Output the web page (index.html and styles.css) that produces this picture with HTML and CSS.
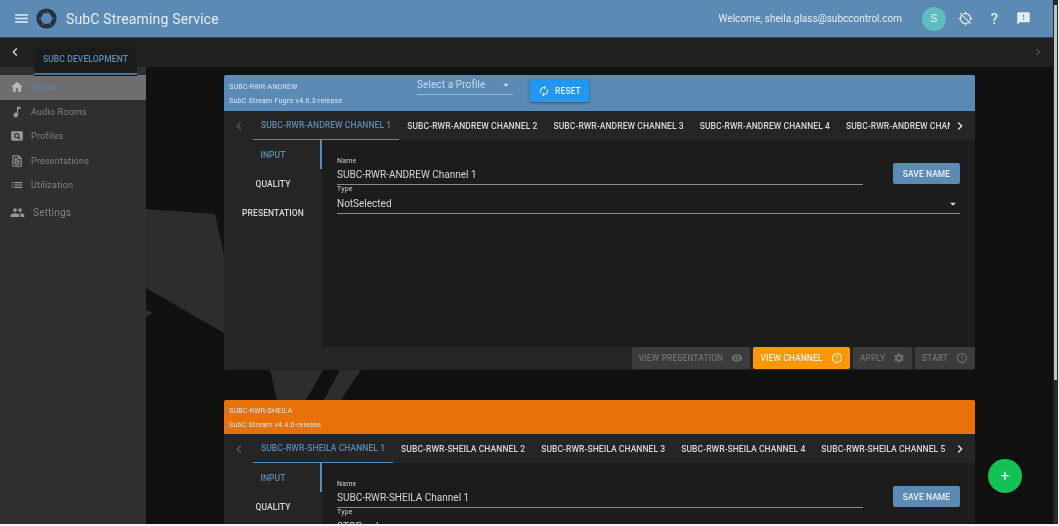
FILE: index.html
```html
<!DOCTYPE html>
<html lang="en">
<head>
    <meta charset="UTF-8">
    <meta name="viewport" content="width=device-width, initial-scale=1.0">
    <title>SubC Streaming Service</title>
    <link rel="stylesheet" href="styles.css">
</head>
<body>
    <svg class="sprite" width="0" height="0">
        <symbol id="i-menu" viewBox="0 0 24 24"><path d="M3 18h18v-2H3v2zm0-5h18v-2H3v2zm0-7v2h18V6H3z"/></symbol>
        <symbol id="i-home" viewBox="0 0 24 24"><path d="M10 20v-6h4v6h5v-8h3L12 3 2 12h3v8z"/></symbol>
        <symbol id="i-music" viewBox="0 0 24 24"><path d="M12 3v10.55c-.59-.34-1.27-.55-2-.55-2.21 0-4 1.79-4 4s1.79 4 4 4 4-1.79 4-4V7h4V3h-6z"/></symbol>
        <symbol id="i-page" viewBox="0 0 24 24"><path d="M11.5 9C10.12 9 9 10.12 9 11.5s1.12 2.5 2.5 2.5 2.5-1.12 2.5-2.5S12.88 9 11.5 9zM20 4H4c-1.1 0-2 .9-2 2v12c0 1.1.9 2 2 2h16c1.1 0 2-.9 2-2V6c0-1.1-.9-2-2-2zm-3.21 14.21l-2.91-2.91c-.69.44-1.51.7-2.38.7C9 16 7 14 7 11.5S9 7 11.5 7 16 9 16 11.5c0 .88-.26 1.69-.7 2.39l2.91 2.9-1.42 1.42z"/></symbol>
        <symbol id="i-file" viewBox="0 0 24 24"><path d="M15 2H6c-1.1 0-2 .9-2 2v16c0 1.1.9 2 2 2h12c1.1 0 2-.9 2-2V7l-5-5zM6 20V4h8v4h4v12H6zm10-10v5c0 2.21-1.79 4-4 4s-4-1.79-4-4V8.5c0-1.47 1.26-2.64 2.76-2.49 1.3.13 2.24 1.32 2.24 2.63V15h-2V8.5c0-.28-.22-.5-.5-.5s-.5.22-.5.5V15c0 1.1.9 2 2 2s2-.9 2-2v-5h2z"/></symbol>
        <symbol id="i-list" viewBox="0 0 24 24"><path d="M3 13h2v-2H3v2zm0 4h2v-2H3v2zm0-8h2V7H3v2zm4 4h14v-2H7v2zm0 4h14v-2H7v2zM7 7v2h14V7H7z"/></symbol>
        <symbol id="i-people" viewBox="0 0 24 24"><path d="M16 11c1.66 0 2.99-1.34 2.99-3S17.66 5 16 5c-1.66 0-3 1.34-3 3s1.34 3 3 3zm-8 0c1.66 0 2.99-1.34 2.99-3S9.66 5 8 5C6.34 5 5 6.34 5 8s1.34 3 3 3zm0 2c-2.33 0-7 1.17-7 3.5V19h14v-2.5c0-2.33-4.67-3.5-7-3.5zm8 0c-.29 0-.62.02-.97.05 1.16.84 1.97 1.97 1.97 3.45V19h6v-2.5c0-2.33-4.67-3.5-7-3.5z"/></symbol>
        <symbol id="i-gps-off" viewBox="0 0 24 24"><path d="M20.94 11c-.46-4.17-3.77-7.48-7.94-7.94V1h-2v2.06c-1.13.12-2.19.46-3.16.97l1.5 1.5C10.16 5.19 11.06 5 12 5c3.87 0 7 3.13 7 7 0 .94-.19 1.84-.52 2.65l1.5 1.5c.5-.96.84-2.02.97-3.15H23v-2h-2.06zM3 4.27l2.04 2.04C3.97 7.62 3.26 9.23 3.06 11H1v2h2.06c.46 4.17 3.77 7.48 7.94 7.94V23h2v-2.06c1.77-.2 3.38-.91 4.69-1.98L19.73 21 21 19.73 4.27 3 3 4.27zm13.27 13.27C15.09 18.45 13.61 19 12 19c-3.87 0-7-3.13-7-7 0-1.61.55-3.09 1.46-4.27l9.81 9.81z"/></symbol>
        <symbol id="i-feedback" viewBox="0 0 24 24"><path d="M20 2H4c-1.1 0-1.99.9-1.99 2L2 22l4-4h14c1.1 0 2-.9 2-2V4c0-1.1-.9-2-2-2zm-7 12h-2v-2h2v2zm0-4h-2V6h2v4z"/></symbol>
        <symbol id="i-renew" viewBox="0 0 24 24"><path d="M12 6v3l4-4-4-4v3c-4.42 0-8 3.58-8 8 0 1.57.46 3.03 1.24 4.26L6.7 14.8c-.45-.83-.7-1.79-.7-2.8 0-3.31 2.69-6 6-6zm6.76 1.74L17.3 9.2c.44.84.7 1.79.7 2.8 0 3.31-2.69 6-6 6v-3l-4 4 4 4v-3c4.42 0 8-3.58 8-8 0-1.57-.46-3.03-1.24-4.26z"/></symbol>
        <symbol id="i-eye" viewBox="0 0 24 24"><path d="M12 4.5C7 4.5 2.73 7.61 1 12c1.73 4.39 6 7.5 11 7.5s9.27-3.11 11-7.5c-1.73-4.39-6-7.5-11-7.5zM12 17c-2.76 0-5-2.24-5-5s2.24-5 5-5 5 2.24 5 5-2.24 5-5 5zm0-8c-1.66 0-3 1.34-3 3s1.34 3 3 3 3-1.34 3-3-1.34-3-3-3z"/></symbol>
        <symbol id="i-error" viewBox="0 0 24 24"><path d="M11 15h2v2h-2zm0-8h2v6h-2zm.99-5C6.47 2 2 6.48 2 12s4.47 10 9.99 10C17.52 22 22 17.52 22 12S17.52 2 11.99 2zM12 20c-4.42 0-8-3.58-8-8s3.58-8 8-8 8 3.58 8 8-3.58 8-8 8z"/></symbol>
        <symbol id="i-gear" viewBox="0 0 24 24"><path d="M19.14 12.94c.04-.3.06-.61.06-.94 0-.32-.02-.64-.07-.94l2.03-1.58c.18-.14.23-.41.12-.61l-1.92-3.32c-.12-.22-.37-.29-.59-.22l-2.39.96c-.5-.38-1.03-.7-1.62-.94l-.36-2.54c-.04-.24-.24-.41-.48-.41h-3.84c-.24 0-.43.17-.47.41l-.36 2.54c-.59.24-1.13.57-1.62.94l-2.39-.96c-.22-.08-.47 0-.59.22L2.74 8.87c-.12.21-.08.47.12.61l2.03 1.58c-.05.3-.09.63-.09.94s.02.64.07.94l-2.03 1.58c-.18.14-.23.41-.12.61l1.92 3.32c.12.22.37.29.59.22l2.39-.96c.5.38 1.03.7 1.62.94l.36 2.54c.05.24.24.41.48.41h3.84c.24 0 .44-.17.47-.41l.36-2.54c.59-.24 1.13-.56 1.62-.94l2.39.96c.22.08.47 0 .59-.22l1.92-3.32c.12-.22.07-.47-.12-.61l-2.01-1.58zM12 15.6c-1.98 0-3.6-1.62-3.6-3.6s1.62-3.6 3.6-3.6 3.6 1.62 3.6 3.6-1.62 3.6-3.6 3.6z"/></symbol>
        <symbol id="i-left" viewBox="0 0 24 24"><path d="M15.41 7.41L14 6l-6 6 6 6 1.41-1.41L10.83 12z"/></symbol>
        <symbol id="i-right" viewBox="0 0 24 24"><path d="M10 6L8.59 7.41 13.17 12l-4.58 4.59L10 18l6-6z"/></symbol>
        <symbol id="i-drop" viewBox="0 0 24 24"><path d="M7 10l5 5 5-5z"/></symbol>
    </svg>

    <div class="window">
        <div class="app">
            <header class="appbar">
                <svg class="ico ico-menu"><use href="#i-menu"/></svg>
                <svg class="logo" viewBox="0 0 20 20">
                    <circle cx="10" cy="10" r="7.4" fill="none" stroke="#25323e" stroke-width="4.4"/>
                    <path d="M10 2.5L14 7M17.5 10L12 8.5M14 16.5L11.5 11.5M6 16.5L8 12M2.5 10L8 11M6 3.5L8.5 8" stroke="#5b8ab5" stroke-width=".7"/>
                </svg>
                <span class="brand">SubC Streaming Service</span>
                <span class="welcome">Welcome, sheila.glass@subccontrol.com</span>
                <span class="avatar">S</span>
                <svg class="ico ico-bar ico-gps"><use href="#i-gps-off"/></svg>
                <span class="help">?</span>
                <svg class="ico ico-bar ico-feedback"><use href="#i-feedback"/></svg>
            </header>

            <div class="subbar">
                <svg class="ico sub-back"><use href="#i-left"/></svg>
                <div class="org-tab">SUBC DEVELOPMENT</div>
                <svg class="ico sub-next"><use href="#i-right"/></svg>
            </div>

            <div class="content">
                <nav class="sidebar">
                    <a class="nav-item active"><svg class="ico"><use href="#i-home"/></svg>Home</a>
                    <a class="nav-item"><svg class="ico"><use href="#i-music"/></svg>Audio Rooms</a>
                    <a class="nav-item"><svg class="ico"><use href="#i-page"/></svg>Profiles</a>
                    <a class="nav-item"><svg class="ico"><use href="#i-file"/></svg>Presentations</a>
                    <a class="nav-item"><svg class="ico"><use href="#i-list"/></svg>Utilization</a>
                    <a class="nav-item nav-settings"><svg class="ico"><use href="#i-people"/></svg>Settings</a>
                </nav>

                <main class="main">
                    <!-- faint watermark behind the cards -->
                    <svg class="watermark" width="907" height="459">
                        <polygon points="0,142 69,147 78,188 78,266 0,221"/>
                        <polygon points="124,303 177,303 160,333 131,333"/>
                        <polygon points="194,303 215,303 195,333 178,333"/>
                        <polygon points="0,243 7,246 0,250"/>
                    </svg>

                    <section class="card">
                        <div class="card-head head-blue">
                            <div class="unit">
                                <div>SUBC-RWR-ANDREW</div>
                                <div>SubC Stream Fugro v4.6.3-release</div>
                            </div>
                            <div class="profile-select">
                                <span>Select a Profile</span>
                                <svg class="ico"><use href="#i-drop"/></svg>
                            </div>
                            <button class="btn btn-reset"><svg class="ico"><use href="#i-renew"/></svg>RESET</button>
                        </div>
                        <div class="tabs">
                            <svg class="ico tab-arrow dim"><use href="#i-left"/></svg>
                            <div class="tab-list">
                                <span class="tab active">SUBC-RWR-ANDREW Channel 1</span>
                                <span class="tab">SUBC-RWR-ANDREW Channel 2</span>
                                <span class="tab">SUBC-RWR-ANDREW Channel 3</span>
                                <span class="tab">SUBC-RWR-ANDREW Channel 4</span>
                                <span class="tab">SUBC-RWR-ANDREW Channel 5</span>
                            </div>
                            <svg class="ico tab-arrow"><use href="#i-right"/></svg>
                        </div>
                        <div class="card-body">
                            <div class="side-tabs">
                                <span class="side-tab active">Input</span>
                                <span class="side-tab">Quality</span>
                                <span class="side-tab">Presentation</span>
                            </div>
                            <div class="panel">
                                <div class="name-row">
                                    <div class="field">
                                        <label>Name</label>
                                        <div class="value">SUBC-RWR-ANDREW Channel 1</div>
                                    </div>
                                    <button class="btn btn-save">SAVE NAME</button>
                                </div>
                                <div class="field field-type">
                                    <label>Type</label>
                                    <div class="value">NotSelected<svg class="ico"><use href="#i-drop"/></svg></div>
                                </div>
                            </div>
                        </div>
                        <div class="card-foot">
                            <button class="btn btn-off btn-pres">VIEW PRESENTATION<svg class="ico"><use href="#i-eye"/></svg></button>
                            <button class="btn btn-view">VIEW CHANNEL<svg class="ico"><use href="#i-error"/></svg></button>
                            <button class="btn btn-off btn-apply">APPLY<svg class="ico"><use href="#i-gear"/></svg></button>
                            <button class="btn btn-off btn-start">START<svg class="ico"><use href="#i-error"/></svg></button>
                        </div>
                    </section>

                    <section class="card">
                        <div class="card-head head-orange">
                            <div class="unit">
                                <div>SUBC-RWR-SHEILA</div>
                                <div>SubC Stream v4.4.0-release</div>
                            </div>
                        </div>
                        <div class="tabs">
                            <svg class="ico tab-arrow dim"><use href="#i-left"/></svg>
                            <div class="tab-list">
                                <span class="tab active">SUBC-RWR-SHEILA Channel 1</span>
                                <span class="tab">SUBC-RWR-SHEILA Channel 2</span>
                                <span class="tab">SUBC-RWR-SHEILA Channel 3</span>
                                <span class="tab">SUBC-RWR-SHEILA Channel 4</span>
                                <span class="tab">SUBC-RWR-SHEILA Channel 5</span>
                            </div>
                            <svg class="ico tab-arrow"><use href="#i-right"/></svg>
                        </div>
                        <div class="card-body">
                            <div class="side-tabs">
                                <span class="side-tab active">Input</span>
                                <span class="side-tab">Quality</span>
                                <span class="side-tab">Presentation</span>
                            </div>
                            <div class="panel">
                                <div class="name-row">
                                    <div class="field">
                                        <label>Name</label>
                                        <div class="value">SUBC-RWR-SHEILA Channel 1</div>
                                    </div>
                                    <button class="btn btn-save">SAVE NAME</button>
                                </div>
                                <div class="field field-type">
                                    <label>Type</label>
                                    <div class="value">STOPped<svg class="ico"><use href="#i-drop"/></svg></div>
                                </div>
                            </div>
                        </div>
                    </section>

                    <button class="fab">+</button>
                </main>
            </div>
        </div>
        <div class="scrollbar"><div class="thumb"></div></div>
    </div>
</body>
</html>
```

FILE: styles.css
```css
* {
    box-sizing: border-box;
}
html, body {
    margin: 0;
    height: 526px;
    overflow: hidden;
    background: #f4f4f4;
}
body {
    font-family: Roboto, "Liberation Sans", sans-serif;
    color: #d8d8d8;
    filter: blur(0.35px);
}
.sprite {
    display: block;
}
.ico {
    width: 14px;
    height: 14px;
    fill: currentColor;
    flex: none;
}
.window {
    display: flex;
    height: 524px;
}
.app {
    width: 1053px;
    display: flex;
    flex-direction: column;
    background: #111;
}

/* top bar */
.appbar {
    height: 38px;
    flex: none;
    display: flex;
    align-items: center;
    padding: 0 0 0 13px;
    background: #5b8ab5;
    border-bottom: 1px solid #33485c;
    color: #e4ecf2;
}
.ico-menu {
    width: 17px;
    height: 17px;
}
.logo {
    width: 21px;
    height: 21px;
    margin-left: 6px;
}
.brand {
    margin-left: 9px;
    font-size: 14px;
    letter-spacing: 0.16px;
}
.welcome {
    margin-left: auto;
    font-size: 10px;
    letter-spacing: 0.02px;
}
.avatar {
    width: 24px;
    height: 24px;
    margin-left: 20px;
    border-radius: 50%;
    background: #5fbdc0;
    display: flex;
    align-items: center;
    justify-content: center;
    font-size: 11px;
}
.ico-bar {
    width: 15px;
    height: 15px;
}
.ico-gps {
    margin-left: 12px;
}
.help {
    width: 15px;
    margin-left: 14px;
    text-align: center;
    font-size: 15px;
    font-weight: 500;
}
.ico-feedback {
    margin: 0 22px 0 14px;
}

/* org tab strip */
.subbar {
    height: 29px;
    flex: none;
    display: flex;
    align-items: flex-start;
    background: #212121;
    position: relative;
    z-index: 2;
    color: #ddd;
}
.sub-back {
    width: 16px;
    height: 16px;
    margin: 6px 11px 0 7px;
}
.org-tab {
    width: 103px;
    height: 28px;
    margin-top: 9px;
    background: #1c1c1c;
    border-bottom: 2px solid #4a7396;
    color: #5b8ab5;
    font-size: 8.5px;
    font-weight: 500;
    letter-spacing: 0.12px;
    text-align: center;
    line-height: 24px;
    box-shadow: 0 1px 0 #0c0c0c;
}
.sub-next {
    margin: 7px 8px 0 auto;
    color: #555;
}

.content {
    flex: 1;
    display: flex;
    min-height: 0;
}

/* left nav */
.sidebar {
    width: 146px;
    flex: none;
    padding-top: 8px;
    background: #2f2f2f;
    color: #828282;
    font-size: 9px;
}
.nav-item {
    height: 24.5px;
    display: flex;
    align-items: center;
    gap: 7px;
    padding-left: 10px;
    letter-spacing: 0.2px;
}
.nav-item .ico {
    color: #979797;
}
.nav-item.active {
    background: #6e6e6e;
    color: #5b8ab5;
}
.nav-item.active .ico {
    color: #b8b8b8;
}
.nav-settings {
    margin-top: 3px;
    gap: 8px;
    font-size: 10px;
}
.nav-settings .ico {
    width: 15px;
    height: 15px;
}

/* main column */
.main {
    flex: 1;
    position: relative;
    overflow: hidden;
    padding: 8px 0 0 78px;
    min-width: 0;
}
.watermark {
    position: absolute;
    left: 0;
    top: 0;
    fill: #2d2d2d;
}
.card {
    position: relative;
    width: 751px;
    margin-bottom: 30px;
    background: #252525;
    border-radius: 2px;
}
.card-head {
    display: flex;
    align-items: flex-start;
    border-radius: 2px 2px 0 0;
    color: #dfe7ee;
}
.head-blue {
    height: 36px;
    background: #5b8ab5;
}
.head-orange {
    height: 34px;
    background: #e8710a;
}
.unit {
    width: 193px;
    padding: 5px 0 0 5px;
    font-size: 7px;
    line-height: 14px;
    letter-spacing: 0.25px;
}
.head-orange .unit {
    padding-top: 4px;
}
.profile-select {
    width: 96px;
    height: 20px;
    display: flex;
    align-items: center;
    justify-content: space-between;
    border-bottom: 1px solid #9db8d0;
    font-size: 10px;
    letter-spacing: 0.1px;
    color: #c9d7e4;
}
.btn {
    border: 0;
    border-radius: 2px;
    font-family: inherit;
    font-size: 8.5px;
    font-weight: 500;
    letter-spacing: 0.08px;
    padding: 0;
    display: flex;
    align-items: center;
    justify-content: center;
    color: #e8eef3;
}
.btn-reset {
    width: 59px;
    height: 22px;
    margin: 5px 0 0 17px;
    gap: 5px;
    background: #2196f3;
    box-shadow: 0 1px 3px rgba(0, 0, 0, 0.4);
}
.btn-reset .ico {
    width: 12px;
    height: 12px;
}

/* channel tabs */
.tabs {
    height: 29px;
    display: flex;
    align-items: center;
    padding: 0 7px;
}
.tab-arrow {
    width: 16px;
    height: 16px;
    color: #e2e2e2;
}
.tab-arrow.dim {
    color: #5a5a5a;
    margin-right: 6px;
}
.tab-list {
    flex: 1;
    display: flex;
    height: 100%;
    overflow: hidden;
    min-width: 0;
    margin-right: 2px;
}
.tab {
    flex: none;
    height: 100%;
    padding: 0 8px;
    display: flex;
    align-items: center;
    font-size: 8.5px;
    font-weight: 500;
    letter-spacing: 0.08px;
    text-transform: uppercase;
    color: #d8d8d8;
}
.tab.active {
    color: #5b8ab5;
    border-bottom: 1px solid #5b8ab5;
}

.card-body {
    height: 207px;
    display: flex;
}
.side-tabs {
    width: 98px;
    flex: none;
    display: flex;
    flex-direction: column;
}
.side-tab {
    height: 29px;
    display: flex;
    align-items: center;
    justify-content: center;
    padding-left: 2px;
    font-size: 8.5px;
    font-weight: 500;
    letter-spacing: 0.08px;
    text-transform: uppercase;
    color: #d8d8d8;
    border-right: 2px solid transparent;
}
.side-tab.active {
    color: #5b8ab5;
    border-right-color: #5b8ab5;
}
.panel {
    flex: 1;
    background: #1c1c1c;
    padding: 16px 15px 0 15px;
}
.name-row {
    display: flex;
    align-items: flex-start;
    gap: 30px;
}
.name-row .field {
    flex: 1;
}
.name-row label {
    margin-top: 1px;
}
.name-row .value {
    height: 19px;
    padding-bottom: 2px;
}
.field label {
    display: block;
    font-size: 7px;
    line-height: 9px;
    letter-spacing: 0.2px;
    color: #cfcfcf;
}
.value {
    height: 20px;
    display: flex;
    align-items: center;
    justify-content: space-between;
    border-bottom: 1px solid #8a8a8a;
    font-size: 10px;
    color: #d6d6d6;
}
.btn-save {
    width: 67px;
    height: 21px;
    margin-top: 7px;
    background: #5b8ab5;
}
.card-foot {
    height: 23px;
    display: flex;
    justify-content: flex-end;
    align-items: flex-start;
    gap: 3px;
}
.card-foot .btn {
    height: 22px;
    gap: 8px;
}
.card-foot .ico {
    width: 12px;
    height: 12px;
}
.btn-off {
    background: #3c3c3c;
    color: #6f6f6f;
}
.btn-pres {
    width: 118px;
}
.btn-view {
    width: 97px;
    background: #ff9800;
    color: #f6f1e6;
}
.btn-apply {
    width: 59px;
}
.btn-start {
    width: 60px;
}
.fab {
    position: absolute;
    right: 31px;
    top: 392px;
    width: 34px;
    height: 34px;
    border: 0;
    padding: 0;
    border-radius: 50%;
    background: #14c156;
    color: #eee;
    font-family: inherit;
    font-size: 15px;
    z-index: 3;
}
.scrollbar {
    width: 5px;
    background: #2a2a2a;
    border-left: 1px solid #222;
}
.thumb {
    width: 3px;
    height: 375px;
    margin-top: 5px;
    background: #c4c4c4;
}
```
